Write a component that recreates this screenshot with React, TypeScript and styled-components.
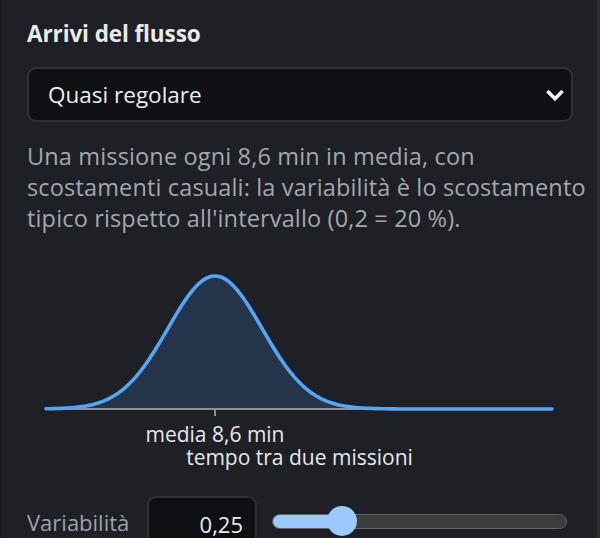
import React from "react";
import styled, { createGlobalStyle } from "styled-components";

const Global = createGlobalStyle`
  html, body { margin: 0; padding: 0; background: #1e2025; }
  body { font-family: "Open Sans", "Noto Sans", sans-serif; }
  * { box-sizing: border-box; }
`;

const Panel = styled.div`
  width: 600px;
  height: 538px;
  overflow: hidden;
  background: #1e2025;
  border-left: 2px solid #17191c;
  border-right: 3px solid #2b2d33;
  padding: 19px 22px 0 25px;
  display: flex;
  flex-direction: column;
  & > * { flex-shrink: 0; }
`;

const Heading = styled.h2`
  margin: 0;
  font-size: 22.5px;
  line-height: 30px;
  font-weight: 700;
  color: #e9ebee;
  letter-spacing: -0.1px;
`;

const SelectBox = styled.div`
  margin-top: 18px;
  width: 546px;
  height: 55px;
  background: #0f1013;
  border: 2px solid #2f3137;
  border-radius: 9px;
  display: flex;
  align-items: center;
  justify-content: space-between;
  padding: 0 5px 0 19px;
  color: #eceef0;
  font-size: 22.5px;
`;

const Description = styled.p`
  margin: 19px 0 0;
  width: 566px;
  font-size: 23.5px;
  letter-spacing: 0.15px;
  line-height: 31px;
  color: #a3a7ae;
`;

const Chart = styled.svg`
  display: block;
  margin-top: 16px;
  width: 546px;
  height: 230px;
  overflow: visible;
`;

const ChartLabel = styled.text`
  font-family: "Open Sans", "Noto Sans", sans-serif;
  font-size: 21px;
  fill: #e6e8eb;
`;

const Row = styled.div`
  margin-top: 16px;
  display: flex;
  align-items: flex-start;
`;

const RowLabel = styled.span`
  font-size: 22px;
  line-height: 30px;
  color: #9ea2a9;
  margin-top: 11px;
  width: 120px;
`;

const NumberBox = styled.div`
  width: 110px;
  height: 56px;
  background: #0e0f12;
  border: 2px solid #2e3036;
  border-radius: 9px;
  display: flex;
  align-items: center;
  justify-content: flex-end;
  padding: 0 12px 0 0;
  font-size: 22px;
  color: #eceef0;
`;

const SliderWrap = styled.div`
  position: relative;
  margin-left: 15px;
  margin-top: 10px;
  width: 295px;
  height: 30px;
  display: flex;
  align-items: center;
`;

const Track = styled.div`
  width: 100%;
  height: 15px;
  border-radius: 8px;
  background: #3c3c3d;
  border: 1.5px solid #626265;
  overflow: hidden;
`;

const Fill = styled.div`
  height: 100%;
  background: #9ccaff;
`;

const Thumb = styled.div`
  position: absolute;
  top: 0;
  width: 30px;
  height: 30px;
  margin-left: -15px;
  border-radius: 50%;
  background: #9ccaff;
`;

const W = 546;
const x0 = 19;
const x1 = 526;
const base = 159;
const mu = 188;
const peak = 133;
const sigma = 47;

function buildCurve() {
  const pts: string[] = [];
  for (let x = x0; x <= x1; x += 2) {
    const y = base - peak * Math.exp(-((x - mu) ** 2) / (2 * sigma * sigma));
    pts.push(`${x.toFixed(1)},${y.toFixed(2)}`);
  }
  return pts;
}

export default function App() {
  const pts = buildCurve();
  const line = "M" + pts.join(" L");
  const area = line + ` L${x1},${base} L${x0},${base} Z`;
  const value = 0.25;
  const frac = (value - 0.05) / (1 - 0.05);
  const thumbX = 14 + frac * (295 - 28);

  return (
    <>
      <Global />
      <Panel>
        <Heading>Arrivi del flusso</Heading>
        <SelectBox>
          <span>Quasi regolare</span>
          <svg width="22" height="22" viewBox="0 0 24 24" fill="none">
            <path d="M5 9l7 7 7-7" stroke="#f2f3f5" strokeWidth="3.8" strokeLinecap="square" strokeLinejoin="miter" />
          </svg>
        </SelectBox>
        <Description>
          Una missione ogni 8,6 min in media, con scostamenti casuali: la variabilità è lo scostamento tipico rispetto all'intervallo (0,2 = 20 %).
        </Description>
        <Chart viewBox={`0 0 ${W} 230`}>
          <path d={area} fill="#24344a" />
          <line x1={x0} y1={base} x2={x1} y2={base} stroke="#8c9097" strokeWidth="2" />
          <line x1={mu} y1={base} x2={mu} y2={base + 7} stroke="#8c9097" strokeWidth="2" />
          <path d={line} fill="none" stroke="#55a5f6" strokeWidth="3.6" strokeLinejoin="round" strokeLinecap="round" />
          <ChartLabel x={mu} y={192} textAnchor="middle">media 8,6 min</ChartLabel>
          <ChartLabel x={(x0 + x1) / 2} y={215} textAnchor="middle">tempo tra due missioni</ChartLabel>
        </Chart>
        <Row>
          <RowLabel>Variabilità</RowLabel>
          <NumberBox>0,25</NumberBox>
          <SliderWrap>
            <Track>
              <Fill style={{ width: `${thumbX}px` }} />
            </Track>
            <Thumb style={{ left: `${thumbX}px` }} />
          </SliderWrap>
        </Row>
      </Panel>
    </>
  );
}
